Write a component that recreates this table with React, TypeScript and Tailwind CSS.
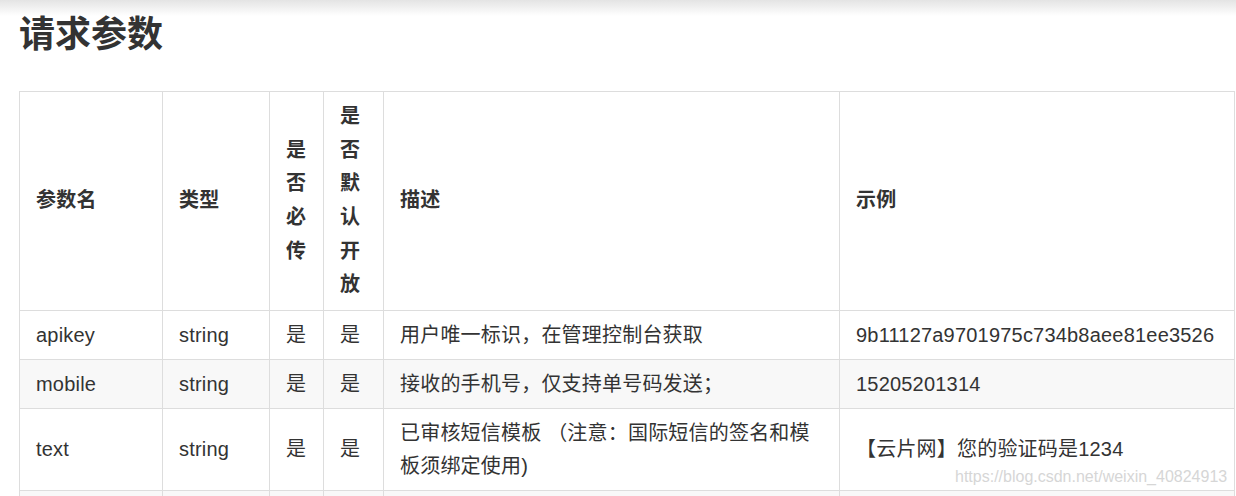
import React from "react";

const rows = [
  { name: "apikey", type: "string", req: "是", open: "是", desc: "用户唯一标识，在管理控制台获取", example: "9b11127a9701975c734b8aee81ee3526", h: "h-[49px]", striped: false },
  { name: "mobile", type: "string", req: "是", open: "是", desc: "接收的手机号，仅支持单号码发送；", example: "15205201314", h: "h-[49px]", striped: true },
  { name: "text", type: "string", req: "是", open: "是", desc: "已审核短信模板 （注意：国际短信的签名和模板须绑定使用)", example: "【云片网】您的验证码是1234", h: "h-[82px]", striped: false },
  { name: "", type: "", req: "", open: "", desc: "", example: "", h: "h-[49px]", striped: true },
];

export default function App() {
  return (
    <div
      className="relative h-[496px] w-[1236px] overflow-hidden bg-white text-[#333]"
      style={{ fontFamily: '"Liberation Sans", "Noto Sans CJK SC", sans-serif' }}
    >
      {/* top header shadow */}
      <div className="absolute left-0 top-0 h-[16px] w-full bg-gradient-to-b from-[#e4e4e4] to-white" />

      <div className="relative px-[19px] pt-[16px]">
        <h2 className="text-[36px] font-bold leading-[38px] text-[#333]">请求参数</h2>

        <table className="mt-[37px] w-[1215px] table-fixed border-collapse text-[20px] tracking-[0.2px]">
          <colgroup>
            <col className="w-[143px]" />
            <col className="w-[107px]" />
            <col className="w-[54px]" />
            <col className="w-[60px]" />
            <col className="w-[456px]" />
            <col className="w-[395px]" />
          </colgroup>
          <thead>
            <tr className="h-[219px] bg-white font-bold">
              <th className="border border-[#ddd] px-4 py-[7px] text-left align-middle leading-[33.6px]">参数名</th>
              <th className="border border-[#ddd] px-4 py-[7px] text-left align-middle leading-[33.6px]">类型</th>
              <th className="border border-[#ddd] px-4 py-[7px] text-left align-middle leading-[33.6px]">是否必传</th>
              <th className="border border-[#ddd] px-4 py-[7px] text-left align-middle leading-[33.6px]">是否默认开放</th>
              <th className="border border-[#ddd] px-4 py-[7px] text-left align-middle leading-[33.6px]">描述</th>
              <th className="border border-[#ddd] px-4 py-[7px] text-left align-middle leading-[33.6px]">示例</th>
            </tr>
          </thead>
          <tbody>
            {rows.map((r, i) => (
              <tr key={i} className={`${r.h} ${r.striped ? "bg-[#f8f8f8]" : "bg-white"}`}>
                <td className="border border-[#ddd] px-4 py-[7px] align-middle leading-[33px]">{r.name}</td>
                <td className="border border-[#ddd] px-4 py-[7px] align-middle leading-[33px]">{r.type}</td>
                <td className="border border-[#ddd] px-4 py-[7px] align-middle leading-[33px]">{r.req}</td>
                <td className="border border-[#ddd] px-4 py-[7px] align-middle leading-[33px]">{r.open}</td>
                <td className="border border-[#ddd] px-4 py-[7px] align-middle leading-[33px]">{r.desc}</td>
                <td className="border border-[#ddd] px-4 py-[7px] align-middle leading-[33px]">{r.example}</td>
              </tr>
            ))}
          </tbody>
        </table>
      </div>

      {/* watermark */}
      <div className="absolute left-[955px] top-[467px] text-[16px] leading-[20px] text-[#d6d6d6] [text-shadow:0_0_1px_#fff]">
        https://blog.csdn.net/weixin_40824913
      </div>
    </div>
  );
}
